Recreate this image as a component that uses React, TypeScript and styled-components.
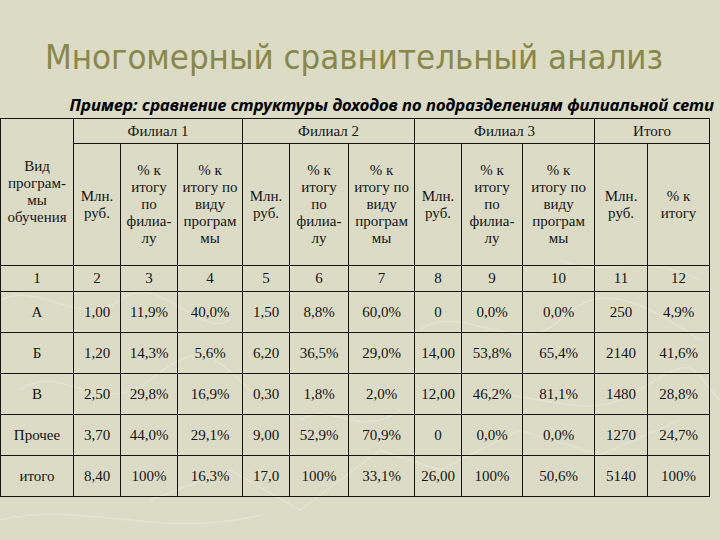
import React from 'react';
import styled, { createGlobalStyle } from 'styled-components';

const GlobalStyle = createGlobalStyle`
  html, body {
    margin: 0;
    padding: 0;
    background: #dcdbc5;
  }
`;

const Slide = styled.div`
  position: relative;
  width: 720px;
  height: 540px;
  overflow: hidden;
  background: #dcdbc5;
`;

const Texture = styled.svg`
  position: absolute;
  left: 0;
  top: 0;
  width: 720px;
  height: 540px;
  pointer-events: none;
`;

const Content = styled.div`
  position: relative;
  display: flex;
  flex-direction: column;
`;

const Title = styled.h1`
  margin: 0;
  padding: 35px 0 0 45px;
  height: 59px;
  font-family: "DejaVu Sans Condensed", "DejaVu Sans", sans-serif;
  font-weight: normal;
  font-size: 34.5px;
  line-height: 44px;
  color: #88884b;
  white-space: nowrap;
`;

const Subtitle = styled.div`
  height: 24px;
  padding-right: 6px;
  text-align: right;
  font-family: "Noto Sans", "DejaVu Sans", sans-serif;
  font-style: italic;
  font-weight: bold;
  font-size: 16.8px;
  line-height: 22px;
  color: #000;
  white-space: nowrap;
`;

const Table = styled.table`
  border-collapse: collapse;
  table-layout: fixed;
  width: 709px;
  margin-left: 0;
`;

const Cell = styled.td<{ $h?: number }>`
  border: 1px solid #141414;
  padding: 0 1px;
  text-align: center;
  vertical-align: middle;
  font-family: "Liberation Serif", "Times New Roman", serif;
  font-size: 15px;
  font-weight: normal;
  line-height: 17px;
  color: #151515;
  height: ${(p) => (p.$h ? `${p.$h}px` : 'auto')};
`;

const cols = [73, 47, 57, 65, 47, 59, 66, 47, 61, 72, 53, 62];

const pctFil = (
  <>
    % к<br />итогу<br />по<br />филиа-<br />лу
  </>
);
const pctVid = (
  <>
    % к<br />итогу по<br />виду<br />програм<br />мы
  </>
);
const mln = (
  <>
    Млн.<br />руб.
  </>
);

const rows: string[][] = [
  ['А', '1,00', '11,9%', '40,0%', '1,50', '8,8%', '60,0%', '0', '0,0%', '0,0%', '250', '4,9%'],
  ['Б', '1,20', '14,3%', '5,6%', '6,20', '36,5%', '29,0%', '14,00', '53,8%', '65,4%', '2140', '41,6%'],
  ['В', '2,50', '29,8%', '16,9%', '0,30', '1,8%', '2,0%', '12,00', '46,2%', '81,1%', '1480', '28,8%'],
  ['Прочее', '3,70', '44,0%', '29,1%', '9,00', '52,9%', '70,9%', '0', '0,0%', '0,0%', '1270', '24,7%'],
  ['итого', '8,40', '100%', '16,3%', '17,0', '100%', '33,1%', '26,00', '100%', '50,6%', '5140', '100%'],
];

const App: React.FC = () => {
  return (
    <>
      <GlobalStyle />
      <Slide>
        <Texture viewBox="0 0 720 540">
          <g fill="none" stroke="#e7e6d4" strokeWidth="1.5" opacity="0.8">
            <path d="M0 300 C 40 280, 80 330, 120 300 S 200 340, 230 320" />
            <path d="M20 390 C 60 360, 100 420, 150 380 S 210 350, 260 400" />
            <path d="M150 500 L 230 470 L 300 510 L 380 450 L 440 470 L 520 430 L 600 455 L 680 420" />
            <path d="M0 520 C 80 500, 160 540, 260 515" />
            <path d="M420 330 C 460 300, 520 360, 560 320 S 640 300, 700 340" />
            <path d="M480 400 C 520 380, 580 430, 640 390 S 690 370, 720 400" />
            <path d="M300 420 C 330 400, 360 440, 400 410" />
            <path d="M560 260 C 600 280, 640 250, 700 280" />
          </g>
        </Texture>
        <Content>
          <Title>Многомерный сравнительный анализ</Title>
          <Subtitle>Пример: сравнение структуры доходов по подразделениям филиальной сети</Subtitle>
          <Table>
            <colgroup>
              {cols.map((w, i) => (
                <col key={i} style={{ width: w }} />
              ))}
            </colgroup>
            <tbody>
              <tr>
                <Cell rowSpan={2}>
                  Вид<br />програм-<br />мы<br />обучения
                </Cell>
                <Cell colSpan={3} $h={24}>Филиал 1</Cell>
                <Cell colSpan={3}>Филиал 2</Cell>
                <Cell colSpan={3}>Филиал 3</Cell>
                <Cell colSpan={2}>Итого</Cell>
              </tr>
              <tr>
                <Cell $h={121}>{mln}</Cell>
                <Cell>{pctFil}</Cell>
                <Cell>{pctVid}</Cell>
                <Cell>{mln}</Cell>
                <Cell>{pctFil}</Cell>
                <Cell>{pctVid}</Cell>
                <Cell>{mln}</Cell>
                <Cell>{pctFil}</Cell>
                <Cell>{pctVid}</Cell>
                <Cell>{mln}</Cell>
                <Cell>
                  % к<br />итогу
                </Cell>
              </tr>
              <tr>
                {cols.map((_, i) => (
                  <Cell key={i} $h={25}>
                    {i + 1}
                  </Cell>
                ))}
              </tr>
              {rows.map((r) => (
                <tr key={r[0]}>
                  {r.map((v, i) => (
                    <Cell key={i} $h={40}>
                      {v}
                    </Cell>
                  ))}
                </tr>
              ))}
            </tbody>
          </Table>
        </Content>
      </Slide>
    </>
  );
};

export default App;
